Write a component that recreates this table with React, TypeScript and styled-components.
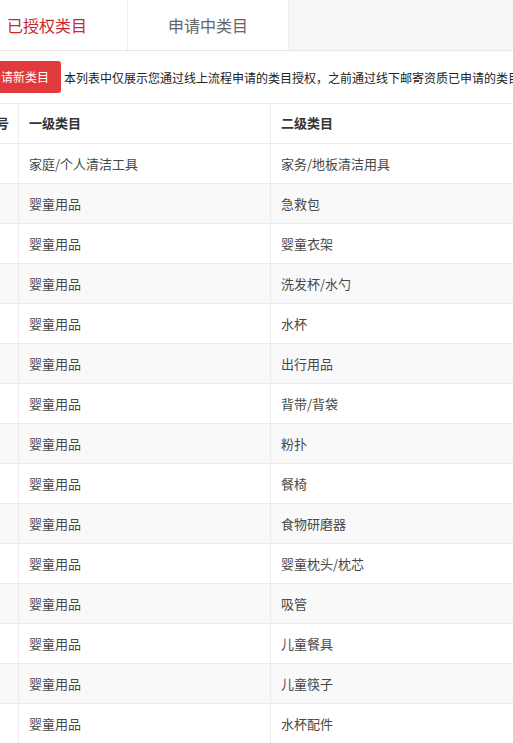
import React from "react";
import styled, { createGlobalStyle } from "styled-components";

const Global = createGlobalStyle`
  html, body { margin: 0; padding: 0; background: #fff; overflow: hidden; }
  body { font-family: "Noto Sans CJK SC", "Noto Sans", sans-serif; color: #333; }
`;

const Page = styled.div`
  margin-left: -33px;
  width: 1100px;
`;

const TabBar = styled.div`
  display: flex;
  height: 50px;
  background: #f6f6f6;
  border-bottom: 1px solid #e8e8e8;
`;

const Tab = styled.div<{ $active?: boolean }>`
  width: 160px;
  height: 50px;
  background: #fff;
  border-right: 1px solid #ececec;
  display: flex;
  align-items: center;
  justify-content: center;
  font-size: 16px;
  color: ${(p) => (p.$active ? "#c9282d" : "#666")};
`;

const Toolbar = styled.div`
  display: flex;
  align-items: center;
  padding: 10px 0 10px 10px;
  gap: 3px;
`;

const Button = styled.button`
  height: 32px;
  padding: 0 12px;
  border: none;
  border-radius: 3px;
  background: #e03a3c;
  color: #fff;
  font-family: inherit;
  font-size: 12px;
  line-height: 32px;
  white-space: nowrap;
`;

const Notice = styled.span`
  font-size: 12px;
  color: #222;
  white-space: nowrap;
`;

const Table = styled.table`
  margin-left: 5px;
  border-collapse: collapse;
  table-layout: fixed;
  width: 600px;
  font-size: 13px;
`;

const Th = styled.th<{ $w: number }>`
  width: ${(p) => p.$w - 20}px;
  height: 37px;
  padding: 0 10px 2px;
  text-align: left;
  font-weight: bold;
  color: #333;
  border: 1px solid #ebebeb;
  white-space: nowrap;
`;

const Tr = styled.tr<{ $striped: boolean }>`
  background: ${(p) => (p.$striped ? "#f9f9f9" : "#fff")};
`;

const Td = styled.td`
  height: 38px;
  padding: 0 10px 1px;
  color: #484848;
  border: 1px solid #ebebeb;
  white-space: nowrap;
`;

const rows: [string, string][] = [
  ["家庭/个人清洁工具", "家务/地板清洁用具"],
  ["婴童用品", "急救包"],
  ["婴童用品", "婴童衣架"],
  ["婴童用品", "洗发杯/水勺"],
  ["婴童用品", "水杯"],
  ["婴童用品", "出行用品"],
  ["婴童用品", "背带/背袋"],
  ["婴童用品", "粉扑"],
  ["婴童用品", "餐椅"],
  ["婴童用品", "食物研磨器"],
  ["婴童用品", "婴童枕头/枕芯"],
  ["婴童用品", "吸管"],
  ["婴童用品", "儿童餐具"],
  ["婴童用品", "儿童筷子"],
  ["婴童用品", "水杯配件"],
];

export default function App() {
  return (
    <Page>
      <Global />
      <TabBar>
        <Tab $active>已授权类目</Tab>
        <Tab>申请中类目</Tab>
      </TabBar>
      <Toolbar>
        <Button>申请新类目</Button>
        <Notice>
          本列表中仅展示您通过线上流程申请的类目授权，之前通过线下邮寄资质已申请的类目授权不在此列表中展示
        </Notice>
      </Toolbar>
      <Table>
        <thead>
          <tr>
            <Th $w={45}>序号</Th>
            <Th $w={251}>一级类目</Th>
            <Th $w={304}>二级类目</Th>
          </tr>
        </thead>
        <tbody>
          {rows.map(([a, b], i) => (
            <Tr key={i} $striped={i % 2 === 1}>
              <Td>{i + 1}</Td>
              <Td>{a}</Td>
              <Td>{b}</Td>
            </Tr>
          ))}
        </tbody>
      </Table>
    </Page>
  );
}
